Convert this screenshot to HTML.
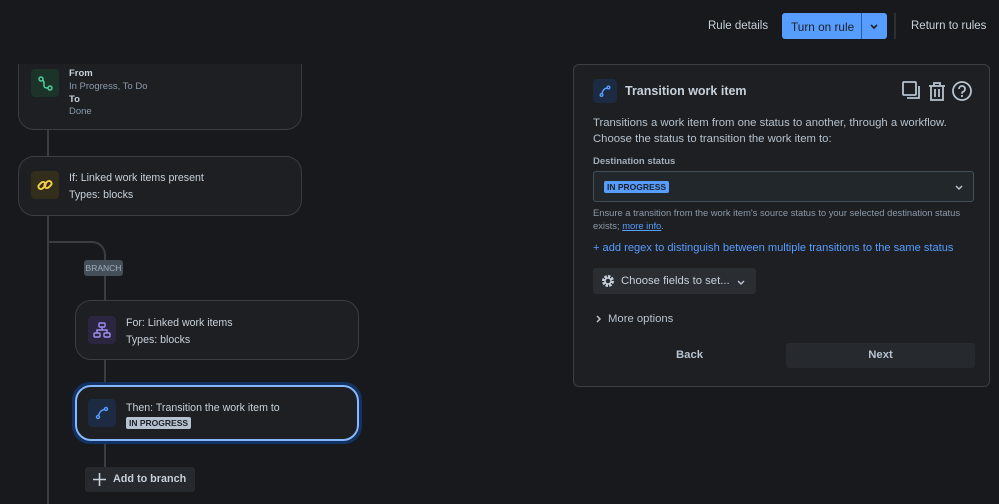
<!DOCTYPE html>
<html><head><style>
*{box-sizing:border-box;margin:0;padding:0}
body{width:999px;height:504px;background:#17191c;font-family:"Liberation Sans",sans-serif;color:#b6c2cf;position:relative;overflow:hidden;font-size:13px}
.a{position:absolute}
.card{position:absolute;background:#1d1f22;border:1px solid #3a3d42;border-radius:16px}
.ic{position:absolute;width:28px;height:28px;border-radius:4px}
.t{position:absolute;white-space:nowrap}
</style></head><body>
<!-- top bar -->
<div class="t" style="left:708px;top:20px;font-size:11.5px;color:#c7d1db">Rule details</div>
<div class="a" style="left:782px;top:13px;width:105px;height:26px;background:#579dff;border-radius:3px"></div>
<div class="a" style="left:861px;top:13px;width:1px;height:26px;background:#2a5fa8"></div>
<div class="t" style="left:791px;top:20px;color:#1d2125;font-size:11.8px">Turn on rule</div>
<svg class="a" style="left:869px;top:21px" width="10" height="10"><path d="M2 4l3 3 3-3" stroke="#1d2125" stroke-width="1.6" fill="none"/></svg>
<div class="a" style="left:894px;top:13px;width:2px;height:26px;background:#2c2f34"></div>
<div class="t" style="left:911px;top:20px;color:#c7d1db;font-size:11.5px">Return to rules</div>

<!-- flow lines -->
<div class="a" style="left:47px;top:130px;width:2px;height:26px;background:#3a3d42"></div>
<div class="a" style="left:47px;top:215px;width:2px;height:289px;background:#3a3d42"></div>
<div class="a" style="left:48px;top:241px;width:58px;height:60px;border-top:2px solid #3a3d42;border-right:2px solid #3a3d42;border-top-right-radius:14px"></div>
<div class="a" style="left:104px;top:359px;width:2px;height:26px;background:#3a3d42"></div>
<div class="a" style="left:104px;top:441px;width:2px;height:26px;background:#3a3d42"></div>
<div class="t" style="left:84px;top:260px;width:39px;height:16px;background:#454f59;border-radius:3px;font-size:8.5px;color:#9fadbc;text-align:center;line-height:16px">BRANCH</div>

<!-- card1 clipped -->
<div class="a" style="left:0;top:64px;width:320px;height:70px;overflow:hidden">
 <div class="card" style="left:18px;top:-30px;width:284px;height:96px"></div>
 <div class="ic" style="left:31px;top:5px;background:#1c3329"></div>
 <svg class="a" style="left:31px;top:5px" width="28" height="28"><circle cx="10" cy="10" r="2" stroke="#4bce97" stroke-width="1.5" fill="none"/><circle cx="19" cy="19" r="2" stroke="#4bce97" stroke-width="1.5" fill="none"/><path d="M11.5 11 Q13 12 13 14 L13 17 Q13 19 17 19" stroke="#4bce97" stroke-width="1.5" fill="none"/></svg>
 <div class="t" style="left:69px;top:4px;font-size:9.5px;font-weight:bold;color:#c7d1db">From</div>
 <div class="t" style="left:69px;top:17px;font-size:9.5px;color:#8c9bab">In Progress, To Do</div>
 <div class="t" style="left:69px;top:30px;font-size:9.5px;font-weight:bold;color:#c7d1db">To</div>
 <div class="t" style="left:69px;top:42px;font-size:9.5px;color:#8c9bab">Done</div>
</div>

<!-- card2 -->
<div class="card" style="left:18px;top:156px;width:284px;height:60px"></div>
<div class="ic" style="left:31px;top:171px;background:#332e1b"></div>
<svg class="a" style="left:31px;top:171px" width="28" height="28"><g stroke="#f5cd47" stroke-width="2" fill="none"><rect x="7" y="12" width="8" height="5" rx="2.5" transform="rotate(-45 11 14.5)"/><rect x="13" y="11" width="8" height="5" rx="2.5" transform="rotate(-45 17 13.5)"/></g></svg>
<div class="t" style="left:69px;top:172px;font-size:10.6px;color:#c7d1db">If: Linked work items present</div>
<div class="t" style="left:69px;top:189px;font-size:10.6px;color:#c7d1db">Types: blocks</div>

<!-- card3 -->
<div class="card" style="left:75px;top:300px;width:284px;height:60px"></div>
<div class="ic" style="left:88px;top:316px;background:#2b2540"></div>
<svg class="a" style="left:88px;top:316px" width="28" height="28" ><g stroke="#9f8fef" stroke-width="1.4" fill="none"><rect x="11" y="7" width="6" height="4" rx="1"/><rect x="6" y="17" width="6" height="4" rx="1"/><rect x="16" y="17" width="6" height="4" rx="1"/><path d="M14 11v3M9 17v-3h10v3"/></g></svg>
<div class="t" style="left:126px;top:317px;font-size:10.6px;color:#c7d1db">For: Linked work items</div>
<div class="t" style="left:126px;top:334px;font-size:10.6px;color:#c7d1db">Types: blocks</div>

<!-- card4 selected -->
<div class="card" style="left:72px;top:382px;width:290px;height:62px;border:3px solid #123263;border-radius:18px;background:none"></div>
<div class="card" style="left:75px;top:385px;width:284px;height:56px;border:2px solid #85b8ff"></div>
<div class="ic" style="left:88px;top:399px;background:#1c2b41"></div>
<svg class="a" style="left:88px;top:399px" width="28" height="28"><g stroke="#579dff" stroke-width="1.4" fill="none"><circle cx="10" cy="18" r="1.5"/><circle cx="18" cy="10" r="1.5"/><path d="M10.5 16.5 Q12 11 16.5 10.5"/></g></svg>
<div class="t" style="left:126px;top:402px;font-size:10.6px;color:#c7d1db">Then: Transition the work item to</div>
<div class="t" style="left:126px;top:417px;height:12px;padding:0 3px;background:#b6c2cf;color:#1d2125;border-radius:2px;font-size:8.5px;font-weight:bold;line-height:12px">IN PROGRESS</div>

<!-- add to branch -->
<div class="a" style="left:85px;top:467px;width:110px;height:25px;background:#26292d;border-radius:3px"></div>
<svg class="a" style="left:92px;top:472px" width="15" height="15"><path d="M7.5 1v13M1 7.5h13" stroke="#c7d1db" stroke-width="1.6"/></svg>
<div class="t" style="left:113px;top:473px;font-size:10.8px;font-weight:bold;color:#c7d1db">Add to branch</div>

<!-- panel -->
<div class="a" style="left:573px;top:64px;width:417px;height:323px;background:#1d1f22;border:1px solid #3b3e44;border-radius:6px"></div>
<div class="ic" style="left:593px;top:79px;width:24px;height:24px;background:#1c2b41"></div>
<svg class="a" style="left:593px;top:79px" width="24" height="24"><g stroke="#579dff" stroke-width="1.4" fill="none"><circle cx="8.5" cy="16" r="1.3"/><circle cx="15.5" cy="8.5" r="1.3"/><path d="M9 14.5 Q10 9.5 14.2 9"/></g></svg>
<div class="t" style="left:625px;top:84px;font-size:12.5px;font-weight:bold;color:#c7d1db">Transition work item</div>
<svg class="a" style="left:901px;top:80px" width="72" height="22"><g stroke="#b6c2cf" stroke-width="1.8" fill="none"><rect x="2" y="2" width="13" height="13" rx="1"/><path d="M18 6v12H6"/><path d="M28 6h16M33 6V3h6v3M30 6v14h12V6M34 9v8M38 9v8"/><circle cx="61" cy="11" r="9"/><path d="M58 9a3 3 0 1 1 4 2.8c-1 .4-1 1-1 2"/></g><circle cx="61" cy="16" r="1.1" fill="#b6c2cf"/></svg>
<div class="t" style="left:593px;top:116px;font-size:11.3px;line-height:15.5px;color:#b6c2cf">Transitions a work item from one status to another, through a workflow.<br>Choose the status to transition the work item to:</div>
<div class="t" style="left:593px;top:156px;font-size:9.5px;font-weight:bold;color:#9fadbc">Destination status</div>
<div class="a" style="left:593px;top:171px;width:381px;height:31px;background:#22272b;border:1px solid #454f59;border-radius:3px"></div>
<div class="t" style="left:604px;top:181px;height:12px;padding:0 3px;background:#579dff;color:#1d2125;border-radius:2px;font-size:8.5px;font-weight:bold;line-height:12px">IN PROGRESS</div>
<svg class="a" style="left:954px;top:182px" width="10" height="10"><path d="M2 4l3 3 3-3" stroke="#b6c2cf" stroke-width="1.5" fill="none"/></svg>
<div class="t" style="left:593px;top:206px;font-size:9.4px;line-height:13px;color:#8c9bab">Ensure a transition from the work item's source status to your selected destination status<br>exists; <span style="color:#579dff;text-decoration:underline">more info</span>.</div>
<div class="t" style="left:593px;top:242px;font-size:11.1px;color:#579dff">+ add regex to distinguish between multiple transitions to the same status</div>
<div class="a" style="left:593px;top:268px;width:163px;height:26px;background:#2a2d31;border-radius:3px"></div>
<svg class="a" style="left:599px;top:272px" width="18" height="18"><circle cx="9" cy="9" r="4.5" stroke="#c7d1db" stroke-width="3" fill="none" stroke-dasharray="2.4 1.1"/><circle cx="9" cy="9" r="3" stroke="#c7d1db" stroke-width="1.5" fill="none"/></svg>
<div class="t" style="left:621px;top:275px;font-size:11.3px;color:#c7d1db">Choose fields to set...</div>
<svg class="a" style="left:736px;top:277px" width="10" height="10"><path d="M2 4l3 3 3-3" stroke="#b6c2cf" stroke-width="1.5" fill="none"/></svg>
<svg class="a" style="left:594px;top:314px" width="10" height="10"><path d="M3 2l3 3-3 3" stroke="#b6c2cf" stroke-width="1.5" fill="none"/></svg>
<div class="t" style="left:608px;top:313px;font-size:11.3px;color:#b6c2cf">More options</div>
<div class="t" style="left:676px;top:349px;font-size:11.3px;font-weight:bold;color:#b6c2cf">Back</div>
<div class="a" style="left:786px;top:343px;width:189px;height:25px;background:#26292d;border-radius:3px"></div>
<div class="t" style="left:786px;top:349px;width:189px;text-align:center;font-size:11.3px;font-weight:bold;color:#b6c2cf">Next</div>
</body></html>
